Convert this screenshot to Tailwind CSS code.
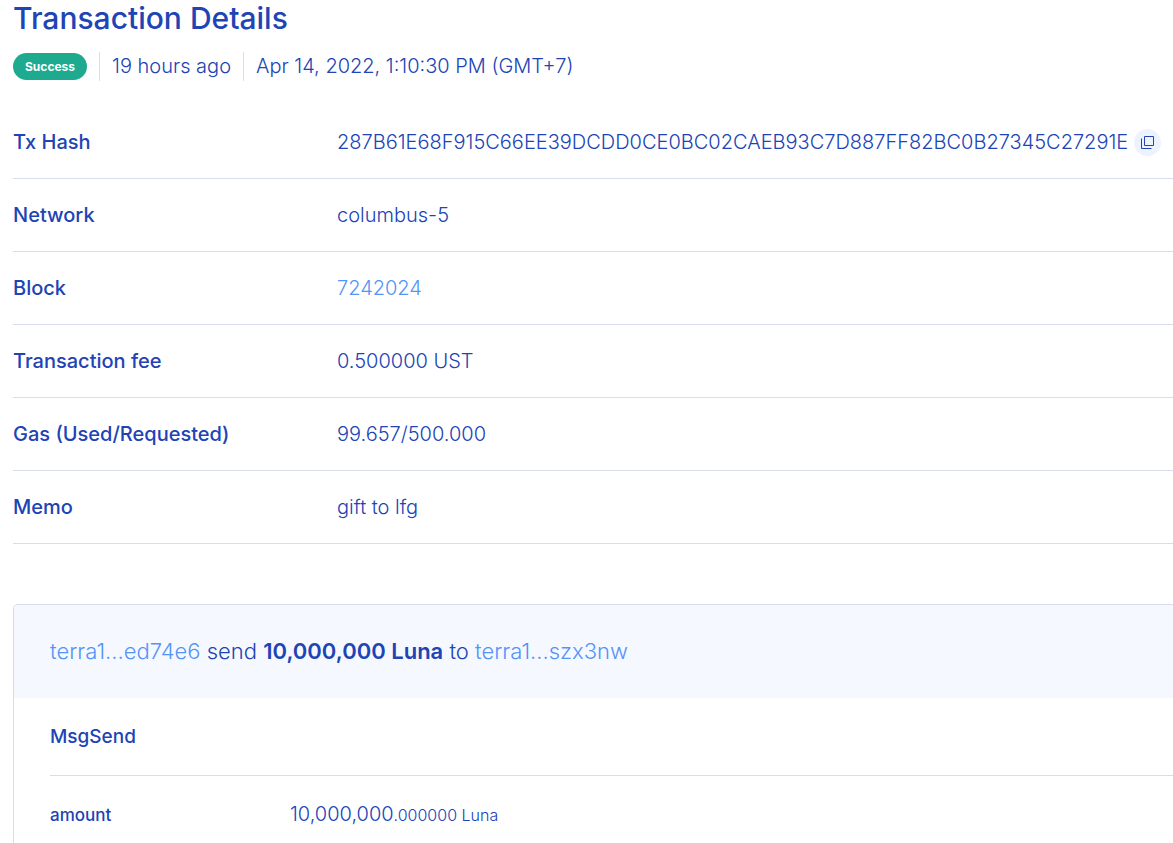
<!DOCTYPE html>
<html lang="en">
<head>
    <meta charset="UTF-8">
    <meta name="viewport" content="width=device-width, initial-scale=1.0">
    <title>Transaction Details</title>
    <script src="https://cdn.jsdelivr.net/npm/@tailwindcss/browser@4"></script>
</head>
<body class="bg-white font-['Inter',sans-serif] text-[#2043b5] overflow-x-hidden">
    <main class="flex min-h-screen flex-col pl-[13px]">
        <header>
            <h1 class="text-[30px] leading-9 font-medium">Transaction Details</h1>
            <div class="mt-4 flex items-center text-[20px] leading-[29px] font-light">
                <span class="rounded-full bg-[#1daa8e] px-3 text-[12px] leading-[27px] font-bold text-white">Success</span>
                <span class="ml-3 border-l border-[#d9dcef] px-3">19 hours ago</span>
                <time class="border-l border-[#d9dcef] px-3" datetime="2022-04-14T13:10:30+07:00">Apr 14, 2022, 1:10:30 PM (GMT+7)</time>
            </div>
        </header>

        <!-- Transaction summary -->
        <dl class="mt-[25px] text-[20px] leading-6 font-light">
            <div class="flex h-[73px] items-center border-b border-[#d9dcef]">
                <dt class="w-[324px] shrink-0 font-medium">Tx Hash</dt>
                <dd class="flex items-center gap-[6px] whitespace-nowrap">
                    287B61E68F915C66EE39DCDD0CE0BC02CAEB93C7D887FF82BC0B27345C27291E
                    <button type="button" aria-label="Copy hash" class="flex size-[27px] shrink-0 items-center justify-center rounded-full bg-[#edf3fe]">
                        <svg class="size-[13px]" viewBox="0 0 13 13" fill="none" stroke="#2043b5">
                            <path d="M3.5 .5h9v9h-9z" />
                            <path d="M.5 2.5v10h10" />
                        </svg>
                    </button>
                </dd>
            </div>
            <div class="flex h-[73px] items-center border-b border-[#d9dcef]">
                <dt class="w-[324px] shrink-0 font-medium">Network</dt>
                <dd>columbus-5</dd>
            </div>
            <div class="flex h-[73px] items-center border-b border-[#d9dcef]">
                <dt class="w-[324px] shrink-0 font-medium">Block</dt>
                <dd><a href="#" class="text-[#5493f7]">7242024</a></dd>
            </div>
            <div class="flex h-[73px] items-center border-b border-[#d9dcef]">
                <dt class="w-[324px] shrink-0 font-medium">Transaction fee</dt>
                <dd>0.500000 UST</dd>
            </div>
            <div class="flex h-[73px] items-center border-b border-[#d9dcef]">
                <dt class="w-[324px] shrink-0 font-medium">Gas (Used/Requested)</dt>
                <dd>99.657/500.000</dd>
            </div>
            <div class="flex h-[73px] items-center border-b border-[#d9dcef]">
                <dt class="w-[324px] shrink-0 font-medium">Memo</dt>
                <dd>gift to lfg</dd>
            </div>
        </dl>

        <!-- Message card -->
        <section class="mt-[60px] grow overflow-hidden rounded-tl-[5px] border-t border-l border-[#d9dcef]">
            <p class="bg-[#f5f9ff] py-8 pl-9 text-[22px] leading-[29px] font-light">
                <a href="#" class="text-[#5493f7]">terra1...ed74e6</a> send
                <strong class="font-semibold">10,000,000 Luna</strong> to
                <a href="#" class="text-[#5493f7]">terra1...szx3nw</a>
            </p>
            <div class="pl-9">
                <h2 class="border-b border-[#d9dcef] py-[26px] text-[19px] leading-[25px] font-medium">MsgSend</h2>
                <dl class="flex items-center pt-[26px]">
                    <dt class="w-60 shrink-0 text-[17px] leading-6 font-medium">amount</dt>
                    <dd class="text-[20px] leading-6 font-light">10,000,000<span class="text-[16px]">.000000 Luna</span></dd>
                </dl>
            </div>
        </section>
    </main>
</body>
</html>
